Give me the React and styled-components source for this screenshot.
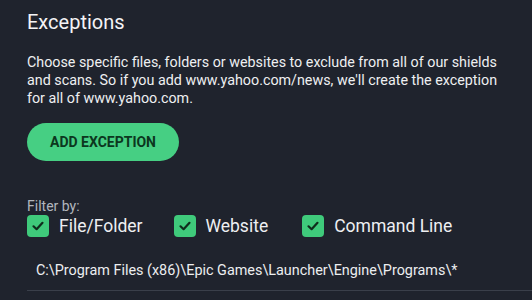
import React from "react";
import styled, { createGlobalStyle } from "styled-components";

const Global = createGlobalStyle`
  html, body { margin: 0; padding: 0; background: #1f232d; }
  body { font-family: Roboto, "Liberation Sans", sans-serif; }
`;

const Page = styled.div`
  width: 532px;
  height: 300px;
  box-sizing: border-box;
  padding: 9px 0 0 27px;
  background: #1f232d;
  overflow: hidden;
  color: #e6e7ea;
`;

const Title = styled.h1`
  margin: 0;
  font-size: 20px;
  line-height: 26px;
  font-weight: 400;
  color: #f4f4f6;
`;

const Description = styled.p`
  margin: 18px 0 0;
  width: 482px;
  font-size: 14.3px;
  line-height: 18px;
  color: #eeeff1;
`;

const AddButton = styled.button`
  margin-top: 16px;
  width: 152px;
  height: 38px;
  border: none;
  border-radius: 19px;
  background: #46cf83;
  color: #0c371e;
  font-family: inherit;
  font-size: 14px;
  font-weight: 700;
  cursor: pointer;
`;

const FilterLabel = styled.div`
  margin-top: 37px;
  font-size: 14px;
  line-height: 16px;
  color: #b2b6be;
`;

const FilterRow = styled.div`
  display: flex;
  align-items: center;
  margin-top: 1px;
`;

const Option = styled.label`
  display: flex;
  align-items: center;
  gap: 10px;
  margin-right: ${(p) => p.$gap}px;
  font-size: 17.5px;
  color: #eeeff2;
`;

const Box = styled.span`
  width: 22px;
  height: 22px;
  border-radius: 4px;
  background: #3fca7b;
  display: flex;
  align-items: center;
  justify-content: center;
`;

const PathRow = styled.div`
  margin-top: 25px;
  padding-left: 9px;
  font-size: 14.4px;
  line-height: 18px;
  color: #eceef0;
`;

const Divider = styled.div`
  margin-top: 10px;
  height: 1px;
  background: #3a3f4a;
`;

const Check = () => (
  <svg width="14" height="14" viewBox="0 0 14 14">
    <path d="M2.5 7.3 L5.6 10.2 L11.5 3.8" fill="none" stroke="#0f2d1c" strokeWidth="2.2" strokeLinecap="round" strokeLinejoin="round" />
  </svg>
);

const options = [
  { label: "File/Folder", gap: 31 },
  { label: "Website", gap: 34 },
  { label: "Command Line", gap: 0 },
];

export default function App() {
  return (
    <>
      <Global />
      <Page>
        <Title>Exceptions</Title>
        <Description>
          Choose specific files, folders or websites to exclude from all of our shields and scans. So if you add www.yahoo.com/news, we'll create the exception for all of www.yahoo.com.
        </Description>
        <AddButton>ADD EXCEPTION</AddButton>
        <FilterLabel>Filter by:</FilterLabel>
        <FilterRow>
          {options.map((o) => (
            <Option key={o.label} $gap={o.gap}>
              <Box><Check /></Box>
              {o.label}
            </Option>
          ))}
        </FilterRow>
        <PathRow>C:\Program Files (x86)\Epic Games\Launcher\Engine\Programs\*</PathRow>
        <Divider />
      </Page>
    </>
  );
}
